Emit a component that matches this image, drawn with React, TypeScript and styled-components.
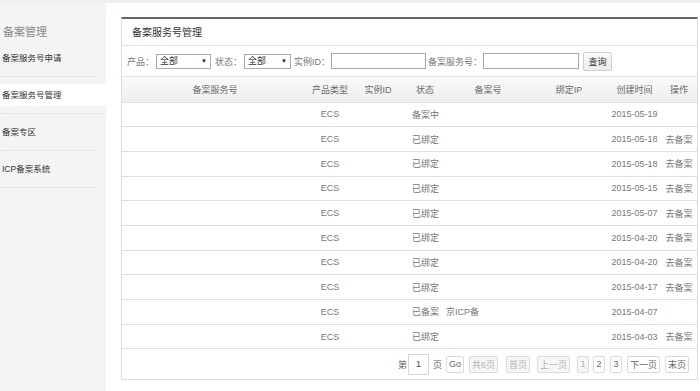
import React from 'react';
import styled, { createGlobalStyle } from 'styled-components';

const GlobalStyle = createGlobalStyle`
  html, body {
    margin: 0;
    padding: 0;
    background: #ffffff;
  }
  body {
    font-family: 'Liberation Sans', 'Noto Sans CJK SC', sans-serif;
    color: #555;
  }
  * { box-sizing: border-box; }
`;

const Page = styled.div`
  width: 700px;
  height: 391px;
  overflow: hidden;
  display: flex;
  flex-direction: column;
`;

const TopStrip = styled.div`
  height: 3px;
  background: #edf1f7;
  flex-shrink: 0;
`;

const Body = styled.div`
  flex: 1;
  display: grid;
  grid-template-columns: 106px 1fr;
`;

const Sidebar = styled.nav`
  background: #f4f4f4;
  padding-top: 21px;
`;

const SideHeading = styled.div`
  font-size: 11px;
  line-height: 16px;
  color: #8a8a8a;
  padding-left: 3px;
`;

const SideItem = styled.div<{ $active?: boolean }>`
  padding: 7px 0;
  margin-right: ${p => (p.$active ? '0' : '10px')};
  border-bottom: 1px dotted #dadada;
`;

const SideLabel = styled.div<{ $active?: boolean }>`
  height: 22px;
  line-height: 22px;
  font-size: 8.5px;
  color: #333;
  padding-left: 2px;
  background: ${p => (p.$active ? '#ffffff' : 'transparent')};
`;

const Main = styled.main`
  background: #ffffff;
  padding: 14px 2px 0 15px;
`;

const Panel = styled.section`
  border: 1px solid #dcdcdc;
  border-top: 2px solid #666;
`;

const PanelTitle = styled.div`
  height: 27px;
  line-height: 27px;
  padding-left: 10px;
  font-size: 10px;
  color: #333;
  border-bottom: 1px solid #e3e3e3;
`;

const FilterBar = styled.div`
  height: 31px;
  display: flex;
  align-items: center;
  padding-left: 5px;
  border-bottom: 1px solid #e3e3e3;
  font-size: 9px;
  color: #777;
`;

const FilterLabel = styled.span<{ $ml?: number }>`
  margin-left: ${p => p.$ml ?? 3}px;
  white-space: nowrap;
`;

const FakeSelect = styled.div<{ $w: number }>`
  position: relative;
  width: ${p => p.$w}px;
  height: 15px;
  border: 1px solid #a9a9a9;
  background: #fff;
  font-size: 9px;
  line-height: 13px;
  color: #333;
  padding-left: 3px;
  margin-left: 2px;
`;

const SelectArrow = styled.span`
  position: absolute;
  right: 3px;
  top: 0;
  font-size: 6px;
  line-height: 13px;
  color: #222;
`;

const TextBox = styled.input<{ $w: number }>`
  width: ${p => p.$w}px;
  height: 16px;
  border: 1px solid #a9a9a9;
  margin: 0 0 0 1px;
  padding: 0 3px;
  font-size: 9px;
  outline: none;
`;

const QueryButton = styled.button`
  height: 19px;
  width: 29px;
  margin-left: 4px;
  padding: 0;
  border: 1px solid #cfcfcf;
  border-radius: 2px;
  background: linear-gradient(#fbfbfb, #ececec);
  font-family: inherit;
  font-size: 9px;
  color: #333;
`;

const Table = styled.table`
  width: 100%;
  border-collapse: collapse;
  table-layout: fixed;
`;

const HeadCell = styled.th`
  height: 25px;
  font-weight: normal;
  font-size: 9px;
  color: #6a6a6a;
  text-align: center;
  background: linear-gradient(#fafafa, #eeeeee);
  border-bottom: 1px solid #dedede;
  padding: 0;
  white-space: nowrap;
`;

const Row = styled.tr`
  height: 24.7px;
  border-bottom: 1px solid #dedede;
`;

const Cell = styled.td<{ $align?: string; $pl?: number }>`
  font-size: 9px;
  color: #777;
  padding: 0 0 0 ${p => p.$pl ?? 0}px;
  text-align: ${p => p.$align ?? 'center'};
  white-space: nowrap;
  overflow: visible;
`;

const Pager = styled.div`
  height: 30px;
  display: flex;
  align-items: center;
  justify-content: flex-end;
  padding-right: 8px;
  font-size: 9px;
  color: #666;
`;

const PagerText = styled.span<{ $ml?: number }>`
  margin-left: ${p => p.$ml ?? 0}px;
`;

const PageInput = styled.input`
  width: 21px;
  height: 21px;
  margin-left: 1px;
  border: 1px solid #d6d6d6;
  text-align: center;
  font-size: 9px;
  color: #444;
  padding: 0;
  outline: none;
`;

const PageButton = styled.span<{ $disabled?: boolean; $ml?: number }>`
  display: inline-flex;
  align-items: center;
  justify-content: center;
  height: 17px;
  min-width: 12px;
  padding: 0 2px;
  margin-left: ${p => p.$ml ?? 5}px;
  border: 1px solid #dadada;
  border-radius: 2px;
  background: ${p => (p.$disabled ? '#f6f6f6' : '#fff')};
  color: ${p => (p.$disabled ? '#b3b3b3' : '#666')};
`;

const columns = [
  { title: '备案服务号', w: 186 },
  { title: '产品类型', w: 44 },
  { title: '实例ID', w: 52 },
  { title: '状态', w: 42 },
  { title: '备案号', w: 84 },
  { title: '绑定IP', w: 78 },
  { title: '创建时间', w: 53 },
  { title: '操作', w: 36 },
];

const rows = [
  { status: '备案中', record: '', date: '2015-05-19', op: '' },
  { status: '已绑定', record: '', date: '2015-05-18', op: '去备案' },
  { status: '已绑定', record: '', date: '2015-05-18', op: '去备案' },
  { status: '已绑定', record: '', date: '2015-05-15', op: '去备案' },
  { status: '已绑定', record: '', date: '2015-05-07', op: '去备案' },
  { status: '已绑定', record: '', date: '2015-04-20', op: '去备案' },
  { status: '已绑定', record: '', date: '2015-04-20', op: '去备案' },
  { status: '已绑定', record: '', date: '2015-04-17', op: '去备案' },
  { status: '已备案', record: '京ICP备', date: '2015-04-07', op: '' },
  { status: '已绑定', record: '', date: '2015-04-03', op: '去备案' },
];

const sideItems = ['备案服务号申请', '备案服务号管理', '备案专区', 'ICP备案系统'];

const App: React.FC = () => {
  return (
    <>
      <GlobalStyle />
      <Page>
        <TopStrip />
        <Body>
          <Sidebar>
            <SideHeading>备案管理</SideHeading>
            {sideItems.map((item, i) => (
              <SideItem key={item} $active={i === 1}>
                <SideLabel $active={i === 1}>{item}</SideLabel>
              </SideItem>
            ))}
          </Sidebar>
          <Main>
            <Panel>
              <PanelTitle>备案服务号管理</PanelTitle>
              <FilterBar>
                <FilterLabel $ml={0}>产品：</FilterLabel>
                <FakeSelect $w={55}>
                  全部<SelectArrow>▼</SelectArrow>
                </FakeSelect>
                <FilterLabel $ml={4}>状态：</FilterLabel>
                <FakeSelect $w={47}>
                  全部<SelectArrow>▼</SelectArrow>
                </FakeSelect>
                <FilterLabel>实例ID：</FilterLabel>
                <TextBox $w={95} />
                <FilterLabel $ml={2}>备案服务号：</FilterLabel>
                <TextBox $w={96} />
                <QueryButton>查询</QueryButton>
              </FilterBar>
              <Table>
                <colgroup>
                  {columns.map(c => (
                    <col key={c.title} style={{ width: c.w }} />
                  ))}
                </colgroup>
                <thead>
                  <tr>
                    {columns.map(c => (
                      <HeadCell key={c.title}>{c.title}</HeadCell>
                    ))}
                  </tr>
                </thead>
                <tbody>
                  {rows.map((r, i) => (
                    <Row key={i}>
                      <Cell />
                      <Cell>ECS</Cell>
                      <Cell />
                      <Cell $align="left" $pl={8}>{r.status}</Cell>
                      <Cell $align="left">{r.record}</Cell>
                      <Cell />
                      <Cell>{r.date}</Cell>
                      <Cell>{r.op}</Cell>
                    </Row>
                  ))}
                </tbody>
              </Table>
              <Pager>
                <PagerText>第</PagerText>
                <PageInput defaultValue="1" />
                <PagerText $ml={4}>页</PagerText>
                <PageButton $ml={4}>Go</PageButton>
                <PageButton $disabled $ml={5}>共6页</PageButton>
                <PageButton $disabled $ml={8}>首页</PageButton>
                <PageButton $disabled $ml={7}>上一页</PageButton>
                <PageButton $disabled $ml={7}>1</PageButton>
                <PageButton $ml={4}>2</PageButton>
                <PageButton>3</PageButton>
                <PageButton>下一页</PageButton>
                <PageButton>末页</PageButton>
              </Pager>
            </Panel>
          </Main>
        </Body>
      </Page>
    </>
  );
};

export default App;
